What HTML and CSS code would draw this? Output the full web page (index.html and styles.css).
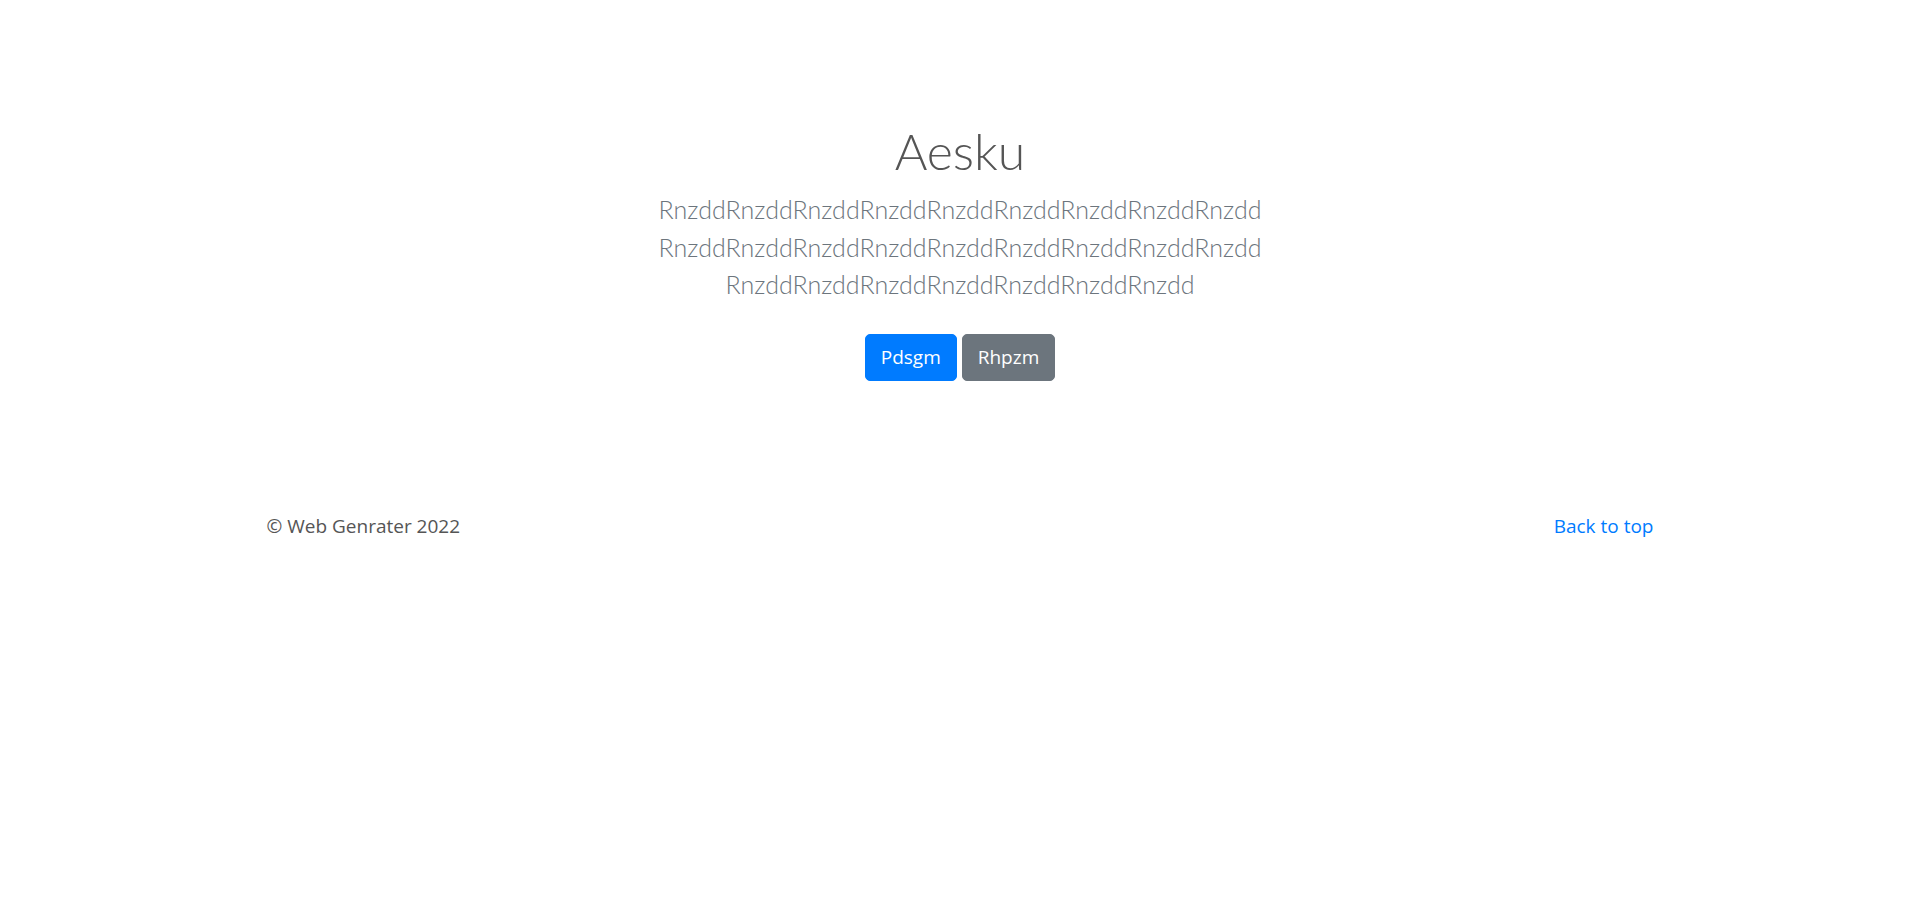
FILE: index.html
```html
<!DOCTYPE html>
<html lang="en">
<head>
<meta charset="utf-8">
<title>Album</title>
<link rel="stylesheet" href="styles.css">
</head>
<body>
<main>
  <section class="hero">
    <h1 class="hero-title">Aesku</h1>
    <p class="lead">RnzddRnzddRnzddRnzddRnzddRnzddRnzddRnzddRnzdd RnzddRnzddRnzddRnzddRnzddRnzddRnzddRnzddRnzdd RnzddRnzddRnzddRnzddRnzddRnzddRnzdd</p>
    <p class="actions"><a class="btn btn-primary" href="#">Pdsgm</a> <a class="btn btn-secondary" href="#">Rhpzm</a></p>
  </section>
</main>
<footer class="footer">
  <div class="container">
    <p class="back"><a href="#">Back to top</a></p>
    <p class="copy">© Web Genrater 2022</p>
  </div>
</footer>
</body>
</html>
```
FILE: styles.css
```css
html, body { margin: 0; padding: 0; }
body {
  font-family: "Open Sans", "Segoe UI", sans-serif;
  font-size: 19px;
  line-height: 30px;
  color: #212529;
  background: #fff;
}
.hero {
  text-align: center;
  padding: 121px 0 120px;
}
.hero-title {
  font-family: Lato, "Open Sans", sans-serif;
  font-size: 50px;
  font-weight: 300;
  line-height: 60px;
  margin: 0 0 10px;
  color: #555;
}
.lead {
  font-family: Lato, "Open Sans", sans-serif;
  font-size: 25px;
  font-weight: 300;
  line-height: 37.5px;
  color: #6c757d;
  margin: 0 auto 20px;
  max-width: 795px;
}
.actions { margin: 0; }
.btn {
  display: inline-block;
  margin: 10px 0;
  padding: 7.5px 15px;
  border: 1.25px solid transparent;
  border-radius: 5px;
  color: #fff;
  text-decoration: none;
  font-size: 19px;
  line-height: 30px;
}
.btn-primary { background: #007bff; border-color: #007bff; }
.btn-secondary { background: #6c757d; border-color: #6c757d; }
.footer { color: #555; }
.container { max-width: 1387px; margin: 0 auto; }
.back { float: right; margin: 0; }
.back a { color: #007bff; text-decoration: none; }
.copy { margin: 0; }
```
